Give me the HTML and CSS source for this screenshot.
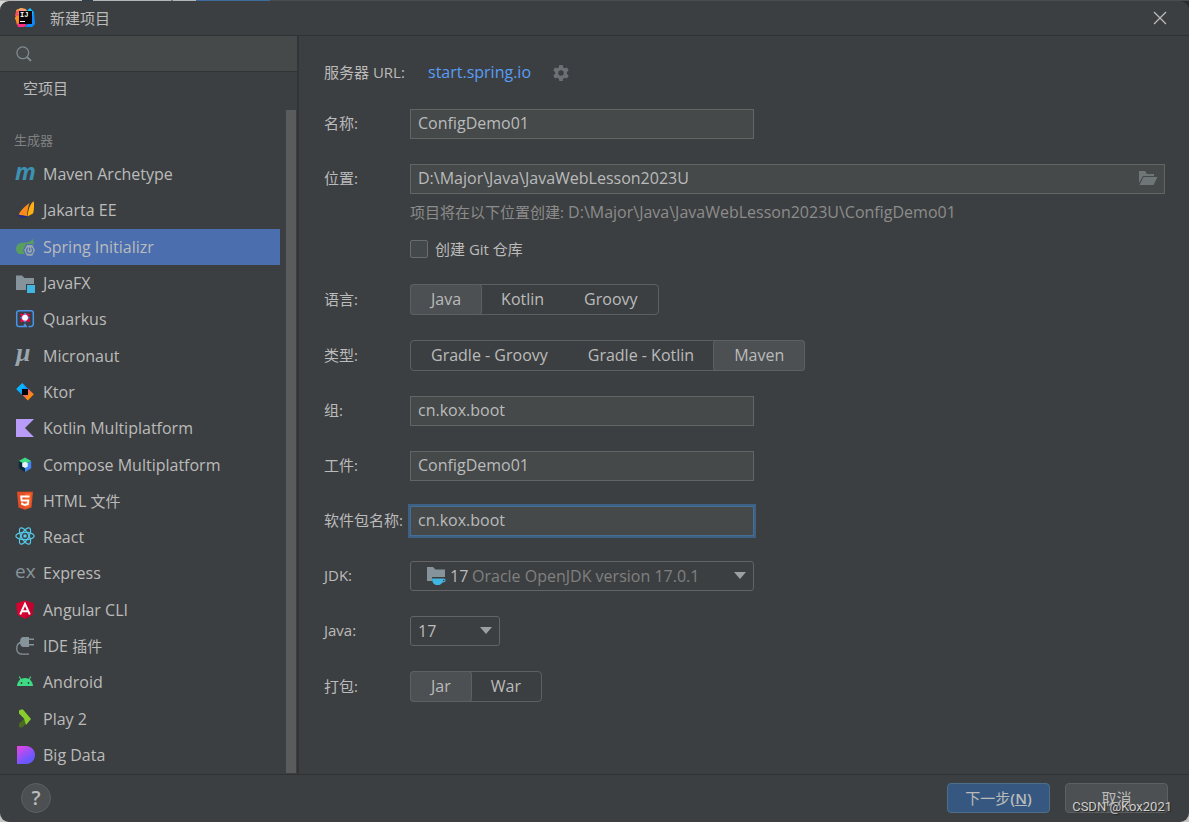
FILE: index.html
```html
<!DOCTYPE html>
<html lang="zh-CN">
<head>
<meta charset="utf-8">
<title>新建项目</title>
<link rel="stylesheet" href="styles.css">
</head>
<body>
<div class="dialog">
  <header class="titlebar">
    <svg class="logo" viewBox="0 0 20 20" aria-hidden="true">
      <path d="M1 2 6 0 11 1 8 10 3 13 0 11 2 7z" fill="#fdb62f"/>
      <path d="M1 3 5 2 4 9 0 8z" fill="#f9505c"/>
      <path d="M0 9 4 7 4 17 2 17z" fill="#ff8a1f"/>
      <path d="M5 0 12 2 10 6 3 6z" fill="#ff9a86"/>
      <path d="M12 3 15 0 19 4 20 16 17 19 10 19 14 14z" fill="#0a8cff"/>
      <path d="M12 3 15 0 18 4 17 9z" fill="#16c8f5"/>
      <path d="M2 16 6 14 12 17 9 19 3 19z" fill="#ff2e83"/>
      <rect x="4" y="3" width="13" height="13" fill="#0b0408"/>
      <text x="5" y="9" class="logo-text">IJ</text>
      <rect x="5" y="13" width="5" height="1" fill="#fff"/>
    </svg>
    <h1 class="title">新建项目</h1>
    <button class="close" type="button" aria-label="关闭">
      <svg viewBox="0 0 14 14" aria-hidden="true"><path d="M1 1 13 13M13 1 1 13" stroke="#bbbbbb" stroke-width="1.3"/></svg>
    </button>
  </header>

  <div class="body">
    <aside class="sidebar">
      <label class="search">
        <svg viewBox="0 0 16 16" aria-hidden="true"><circle cx="6.8" cy="6.8" r="5.9" fill="none" stroke="#7f8b91" stroke-width="1.3"/><path d="M11 11 15 15" stroke="#7f8b91" stroke-width="1.8"/></svg>
        <input type="text" aria-label="搜索">
      </label>
      <div class="lists">
        <div class="list-content">
          <a class="empty-project" href="#empty">空项目</a>
          <h2 class="group">生成器</h2>
          <nav class="generators">
            <a class="item" href="#maven"><svg viewBox="0 0 20 20"><text x="0" y="16" class="glyph-m">m</text></svg>Maven Archetype</a>
            <a class="item" href="#jakarta"><svg viewBox="0 0 20 20"><path d="M18.8 1.2C16 3 13.500 7 12.500 16.500L18 13.500C19.200 10 19.200 5 18.800 1.200z" fill="#fdb010"/><path d="M14.500 3C10 6 6 10 3.500 14.800L12 16C12.300 11 13 7 14.500 3z" fill="#fd8a18"/><path d="M1.500 14.300C5 15 9 16 13 16.500L10 17.800 6 17.800z" fill="#1b2a8c"/></svg>Jakarta EE</a>
            <a class="item selected" href="#spring"><svg viewBox="0 0 20 20"><path d="M18 2C19 6 19 9 18 12L10 17 4 17C0 15 0 9 4 6.500 8 5 14 7 18 2z" fill="#599e5e"/><path d="M11 7H18L21 13.300 18 19.500H11L8 13.300z" fill="#4b6eaf"/><path d="M12 8H17.300L20 13.300 17.300 18.700H12L9.200 13.300z" fill="#9aa7b0"/><circle cx="14.600" cy="13.500" r="3" fill="none" stroke="#4b6eaf" stroke-width="1.200"/><path d="M14.600 9.800V13.500" stroke="#9aa7b0" stroke-width="3"/><path d="M14.600 10.800V13.800" stroke="#4b6eaf" stroke-width="1.200"/></svg>Spring Initializr</a>
            <a class="item" href="#javafx"><svg viewBox="0 0 20 20"><path d="M1 2.500H7L9.500 5H19V11H11V17H1z" fill="#87939a"/><rect x="12" y="12" width="8" height="8" fill="#40b6e0"/></svg>JavaFX</a>
            <a class="item" href="#quarkus"><svg viewBox="0 0 20 20"><path d="M8 17.500H4A2.300 2.300 0 0 1 1.700 15.200V4A2.300 2.300 0 0 1 4 1.700H16A2.300 2.300 0 0 1 18.300 4V15.200A2.300 2.300 0 0 1 16 17.500H13.500" fill="none" stroke="#4695eb" stroke-width="1.500"/><path d="M10 14 12.500 18.200H7.500z" fill="#4695eb"/><path d="M10 3.800 12.500 6 14.800 8.800 12.200 11.600 10 13.500 7.600 11.600 5.200 8.800 7.500 6z" fill="#4695eb"/><path d="M5 4.500 10 5.500 7 9zM15 5.500 11 4 13 8.500zM5.500 13.500 6 9 10 12zM15 13 14 9 10.500 12z" fill="#ff004a"/><circle cx="10" cy="8.700" r="2.900" fill="#fff"/></svg>Quarkus</a>
            <a class="item" href="#micronaut"><svg viewBox="0 0 20 20"><text x="1" y="15" class="glyph-mu">μ</text></svg>Micronaut</a>
            <a class="item" href="#ktor"><svg viewBox="0 0 20 20"><defs><linearGradient id="kt1" x1="0" y1="0" x2="1" y2="1"><stop offset=".4" stop-color="#08b4ff"/><stop offset="1" stop-color="#1a6cff"/></linearGradient><linearGradient id="kt2" x1="0" y1="0" x2="1" y2="1"><stop offset=".2" stop-color="#d950b8"/><stop offset=".65" stop-color="#ff8a08"/></linearGradient></defs><path d="M7.200 1 13.200 7 7 13 1.200 7z" fill="url(#kt1)"/><path d="M13 6.500 18.800 12.300 12.800 18.500 7 12.500z" fill="url(#kt2)"/><rect x="7" y="7" width="6" height="6" fill="#000"/></svg>Ktor</a>
            <a class="item" href="#kmp"><svg viewBox="0 0 20 20"><path d="M1 1H19L10 10 19 19H1z" fill="#b99bf8"/></svg>Kotlin Multiplatform</a>
            <a class="item" href="#compose"><svg viewBox="0 0 20 20"><path d="M10 2.500 16.200 6 10 9.600 3.800 6z" fill="#3ddc84"/><path d="M3.800 6 10 9.600V17L3.800 13.300z" fill="#0b2a3c"/><path d="M16.200 6V13.300L10 17V9.600z" fill="#4285f4"/><path d="M10 6.800 12.800 8.300V11.500L10 13 7.200 11.500V8.300z" fill="#e8f3f8"/></svg>Compose Multiplatform</a>
            <a class="item" href="#html"><svg viewBox="0 0 20 20"><path d="M2 .8H18L16.500 16.500 10 18.700 3.500 16.500z" fill="#e44d26"/><path d="M10 2.200H16.500L15.200 15.400 10 17.200z" fill="#f16529"/><path d="M14.500 5.500H6.200L6.600 9.500H13.300L12.900 13 10 14 7.100 13V11.500" fill="none" stroke="#fff" stroke-width="1.900"/></svg><span>HTML <span class="han">文件</span></span></a>
            <a class="item" href="#react"><svg viewBox="0 0 20 20"><g fill="none" stroke="#53c8e8" stroke-width="1.200"><ellipse cx="10" cy="9" rx="9.200" ry="3.700"/><ellipse cx="10" cy="9" rx="9.200" ry="3.700" transform="rotate(60 10 9)"/><ellipse cx="10" cy="9" rx="9.200" ry="3.700" transform="rotate(120 10 9)"/></g><circle cx="10" cy="9" r="1.800" fill="#53c8e8"/></svg>React</a>
            <a class="item" href="#express"><svg viewBox="0 0 20 20"><text x="0" y="15" class="glyph-ex">ex</text></svg>Express</a>
            <a class="item" href="#angular"><svg viewBox="0 0 20 20"><path d="M10 .5 18.800 3.500 17.500 14.800 10 18.800 2.500 14.800 1.200 3.500z" fill="#dd0031"/><path d="M10 .5 18.800 3.500 17.500 14.800 10 18.800z" fill="#c3002f"/><path d="M5.200 14.500 10 3.800 14.800 14.500M7 11.300H13" fill="none" stroke="#fff" stroke-width="1.900"/></svg>Angular CLI</a>
            <a class="item" href="#plugin"><svg viewBox="0 0 20 20"><path d="M14 18.200H7.500C3.500 18.200 1.700 15.800 1.700 12.300 1.700 8.500 3.500 6.300 8 6" fill="none" stroke="#87939a" stroke-width="1.300"/><path d="M8 1H14V11H8C6 11 5 8.500 5 6S6 1 8 1z" fill="#87939a"/><path d="M14 3.300H19M14 8.700H19" stroke="#87939a" stroke-width="1.400"/></svg><span>IDE <span class="han">插件</span></span></a>
            <a class="item" href="#android"><svg viewBox="0 0 20 20"><path d="M2 14C2.400 9.500 5.500 6 10 6S17.600 9.500 18 14z" fill="#3ddc84"/><path d="M6 8 4.300 4.500M14 8 15.700 4.500" stroke="#3ddc84" stroke-width="1.100"/><circle cx="6.500" cy="11" r=".9" fill="#3c3f41"/><circle cx="13.500" cy="11" r=".9" fill="#3c3f41"/></svg>Android</a>
            <a class="item" href="#play"><svg viewBox="0 0 20 20"><path d="M4 14.500 10 9 13 12 7.500 18.500H5L4 17.500z" fill="#4a6d20"/><path d="M4 1.500 6 .5H8L16 10 11 16 9 9.500 4 4.500z" fill="#88cc2e"/></svg>Play 2</a>
            <a class="item" href="#bigdata"><svg viewBox="0 0 20 20"><defs><linearGradient id="bd" x1="0" y1="0" x2=".7" y2="1"><stop offset="0" stop-color="#ea45e4"/><stop offset=".8" stop-color="#6b57ff"/></linearGradient></defs><path d="M2 1H11C16 1 20 5 20 10S16 19 11 19H2z" fill="url(#bd)"/></svg>Big Data</a>
          </nav>
        </div>
        <div class="scrollbar"></div>
      </div>
    </aside>

    <main class="form">
      <div class="row server">
        <span class="label">服务器 URL:</span>
        <a class="link" href="#server">start.spring.io</a>
        <button class="gear" type="button" aria-label="设置">
          <svg viewBox="0 0 16 16" aria-hidden="true"><path fill="#6a7073" fill-rule="evenodd" d="M6.300 0H9.700L10.100 2.300 11.800 3.300 14 2.500 15.700 5.400 13.900 6.900V9.100L15.700 10.600 14 13.500 11.800 12.700 10.100 13.700 9.700 16H6.300L5.900 13.700 4.200 12.700 2 13.500.3 10.600 2.100 9.100V6.900L.3 5.400 2 2.500 4.200 3.300 5.900 2.300zM8 5.300A2.700 2.700 0 1 0 8 10.700 2.700 2.700 0 1 0 8 5.300z"/></svg>
        </button>
      </div>
      <div class="row">
        <label class="label" for="name">名称:</label>
        <input class="field" id="name" type="text" value="ConfigDemo01">
      </div>
      <div class="row">
        <label class="label" for="location">位置:</label>
        <div class="field wide">
          <input id="location" type="text" value="D:\Major\Java\JavaWebLesson2023U">
          <button class="browse" type="button" aria-label="浏览">
            <svg viewBox="0 0 20 16" aria-hidden="true"><path d="M1 1H7L9 4H16V6H5L1 13z" fill="#6e7678"/><path d="M5.500 7H19.500L15.500 15H1.500z" fill="#6e7678"/></svg>
          </button>
        </div>
      </div>
      <div class="row below">
        <p class="hint"><span class="han">项目将在以下位置创建:</span> D:\Major\Java\JavaWebLesson2023U\ConfigDemo01</p>
        <label class="check"><input type="checkbox">创建 Git 仓库</label>
      </div>
      <div class="row" role="radiogroup" aria-label="语言">
        <span class="label">语言:</span>
        <div class="segments">
          <label class="segment"><input type="radio" name="lang" checked>Java</label>
          <label class="segment"><input type="radio" name="lang">Kotlin</label>
          <label class="segment"><input type="radio" name="lang">Groovy</label>
        </div>
      </div>
      <div class="row" role="radiogroup" aria-label="类型">
        <span class="label">类型:</span>
        <div class="segments">
          <label class="segment"><input type="radio" name="type">Gradle - Groovy</label>
          <label class="segment"><input type="radio" name="type">Gradle - Kotlin</label>
          <label class="segment"><input type="radio" name="type" checked>Maven</label>
        </div>
      </div>
      <div class="row">
        <label class="label" for="group">组:</label>
        <input class="field" id="group" type="text" value="cn.kox.boot">
      </div>
      <div class="row">
        <label class="label" for="artifact">工件:</label>
        <input class="field" id="artifact" type="text" value="ConfigDemo01">
      </div>
      <div class="row">
        <label class="label" for="package">软件包名称:</label>
        <input class="field active" id="package" type="text" value="cn.kox.boot">
      </div>
      <div class="row">
        <label class="label" for="jdk">JDK:</label>
        <div class="combo jdk">
          <select id="jdk"><option>Oracle OpenJDK version 17.0.1</option></select>
          <span class="prefix">
            <svg viewBox="0 0 20 20" aria-hidden="true"><path d="M1 1H7L9.500 3.500H19V11H6V15H1z" fill="#87939a"/><path d="M6 12.500H17.500C20.500 12.500 20.500 16.500 16.500 16.500 15 18.500 13.500 19 12 19H11C8 19 6 16.500 6 12.500z" fill="#40b6e0"/><circle cx="17.700" cy="14.500" r=".8" fill="#3c3f41"/></svg>17
          </span>
          <svg class="arrow" viewBox="0 0 12 8" aria-hidden="true"><path d="M0 0H12L6 7z" fill="#9da0a2"/></svg>
        </div>
      </div>
      <div class="row">
        <label class="label" for="java">Java:</label>
        <div class="combo java">
          <select id="java"><option>17</option></select>
          <svg class="arrow" viewBox="0 0 12 8" aria-hidden="true"><path d="M0 0H12L6 7z" fill="#9da0a2"/></svg>
        </div>
      </div>
      <div class="row" role="radiogroup" aria-label="打包">
        <span class="label">打包:</span>
        <div class="segments">
          <label class="segment"><input type="radio" name="pack" checked>Jar</label>
          <label class="segment"><input type="radio" name="pack">War</label>
        </div>
      </div>
    </main>
  </div>

  <footer class="footer">
    <button class="help" type="button" aria-label="帮助">?</button>
    <button class="btn primary" type="button">下一步<b>(<u>N</u>)</b></button>
    <button class="btn" type="button">取消</button>
    <span class="watermark">CSDN @Kox2021</span>
  </footer>
</div>
</body>
</html>
```
FILE: styles.css
```css
* { box-sizing: border-box; }

body {
  margin: 0;
  padding-top: 1px;
  background:
    linear-gradient(90deg, #b4b4b4 0 82px, #2d3e4c 82px 93px, #b4b4b4 93px 171px, #777 171px 173px, #b4b4b4 173px 196px, #3f6c9f 196px 270px, #4a4d4f 270px) 0 0 / 100% 1px no-repeat,
    linear-gradient(90deg, #d8d8d8 50%, #2b2b2b 50%) 0 0 / 100% 50% no-repeat,
    #c4c4c4;
  color: #bbbbbb;
  font: 15px/20px "Open Sans", "Noto Sans CJK SC", sans-serif;
}

a { color: inherit; text-decoration: none; }
input, select, button { font: inherit; color: inherit; }
button { padding: 0; border: 0; background: none; }
svg { display: block; flex: none; overflow: visible; }

.dialog {
  display: flex;
  flex-direction: column;
  min-height: calc(100vh - 1px);
  border-radius: 9px;
  background: #3c3f41;
  overflow: hidden;
}

/* Latin text is set one step larger than Han text */
.item, .field, .segment, .link, .combo, .hint { font-size: 16px; }
.han { font-size: 15px; }

/* title bar */
.titlebar {
  display: flex;
  align-items: center;
  height: 35px;
  padding: 0 22px 0 15px;
  border-bottom: 1px solid #2f3133;
}
.logo { width: 20px; height: 20px; margin-right: 15px; }
.logo-text { font: bold 7px "Liberation Mono", monospace; fill: #fff; }
.title { flex: 1; margin: 0; font-size: 15px; font-weight: 400; }
.close svg { width: 14px; height: 14px; }

.body { display: flex; flex: 1; }

/* sidebar */
.sidebar {
  display: flex;
  flex-direction: column;
  flex: none;
  width: 299px;
  border-right: 2px solid #323436;
}
.search {
  display: flex;
  align-items: center;
  gap: 8px;
  height: 36px;
  padding: 0 16px;
  background: #45494a;
  border-bottom: 1px solid #323436;
}
.search svg { width: 16px; height: 16px; }
.search input { flex: 1; min-width: 0; border: 0; background: none; outline: none; }
.lists { display: flex; flex: 1; }
.list-content { display: flex; flex-direction: column; flex: 1; }
.empty-project { padding: 6px 23px; }
.group {
  margin: 0;
  padding: 26px 14px 6px;
  color: #7f8182;
  font-size: 13px;
  font-weight: 400;
}
.generators {
  display: flex;
  flex-direction: column;
  flex: 1;
  justify-content: space-between;
  padding-bottom: 1px;
}
.item {
  display: flex;
  align-items: center;
  gap: 8px;
  height: 36px;
  margin-right: 6px;
  padding-left: 15px;
}
.item svg { width: 20px; height: 20px; }
.selected { background: #4b6eaf; }
.scrollbar { width: 10px; margin: 38px 1px 1px 0; background: #595b5d; }
.glyph-m { font: italic bold 23px "Open Sans", sans-serif; fill: #3d91b3; }
.glyph-mu { font: italic bold 26px "Liberation Serif", serif; fill: #9aa7b0; }
.glyph-ex { font: 19px "Open Sans", sans-serif; fill: #87939a; }

/* form */
.form {
  display: flex;
  flex-direction: column;
  flex: 1;
  gap: 25px;
  min-width: 0;
  padding: 26px 24px 25px 25px;
}
.row { display: flex; align-items: center; }
.label { flex: none; width: 86px; padding-bottom: 2px; white-space: nowrap; }
.server { height: 22px; }
.server .label { width: 104px; }
.link { padding-bottom: 2px; color: #589df6; }
.gear { margin-left: 22px; }
.gear svg { width: 16px; height: 16px; }
.field {
  width: 344px;
  height: 30px;
  padding: 0 7px 2px;
  border: 1px solid #646464;
  background: #45494a;
  outline: none;
}
.wide { display: flex; align-items: center; flex: 1; padding-right: 6px; }
.wide input { flex: 1; min-width: 0; padding: 0; border: 0; background: none; outline: none; }
.browse svg { width: 20px; height: 16px; }
.active { border-color: #466d94; box-shadow: 0 0 0 2px #3d6185; }

.below { flex-direction: column; align-items: flex-start; gap: 17px; margin-top: -17px; padding-left: 86px; }
.hint { margin: 0; color: #8c8c8c; }
.check { display: flex; align-items: center; gap: 7px; }
.check input {
  appearance: none;
  width: 18px;
  height: 18px;
  margin: 0;
  border: 1px solid #6b6b6b;
  border-radius: 2px;
  background: #43494a;
}

.segments { display: flex; height: 31px; border: 1px solid #5e6060; border-radius: 4px; }
.segment { display: flex; align-items: center; padding: 0 20px 1px; }
.segment input { position: absolute; appearance: none; margin: 0; }
.segment:has(:checked) {
  background: #4c5052;
  border-radius: 3px;
  box-shadow: 0 0 0 1px #5e6060;
}

.combo { display: grid; align-items: center; height: 30px; }
.combo > * { grid-area: 1 / 1; }
.combo select {
  appearance: none;
  width: 100%;
  height: 30px;
  padding: 0 7px;
  border: 1px solid #646464;
  border-radius: 3px;
  background: #3c3f41;
}
.jdk { width: 344px; }
.java { width: 90px; }
.jdk select { padding-left: 61px; color: #808080; }
.prefix { display: flex; align-items: center; gap: 4px; padding-left: 16px; pointer-events: none; }
.prefix svg { width: 20px; height: 20px; }
.arrow { justify-self: end; width: 12px; height: 8px; margin-right: 8px; pointer-events: none; }

/* footer */
.footer {
  position: relative;
  display: flex;
  align-items: center;
  gap: 15px;
  height: 48px;
  padding: 0 21px 1px;
  border-top: 1px solid #2f3133;
}
.help {
  width: 30px;
  height: 30px;
  margin-right: auto;
  border: 1px solid #5e6060;
  border-radius: 50%;
  background: #4c5052;
  font-size: 20px;
  font-weight: 600;
}
.btn {
  width: 103px;
  height: 30px;
  border: 1px solid #5e6060;
  border-radius: 4px;
  background: #4c5052;
}
.primary { border-color: #4c708c; background: #365880; }
.primary b { font-weight: 600; }
.watermark {
  position: absolute;
  right: 17px;
  bottom: 6px;
  color: #cfcfcf;
  font: 13px/18px Roboto, sans-serif;
  text-shadow: 1px 1px 1px #222;
}
```
